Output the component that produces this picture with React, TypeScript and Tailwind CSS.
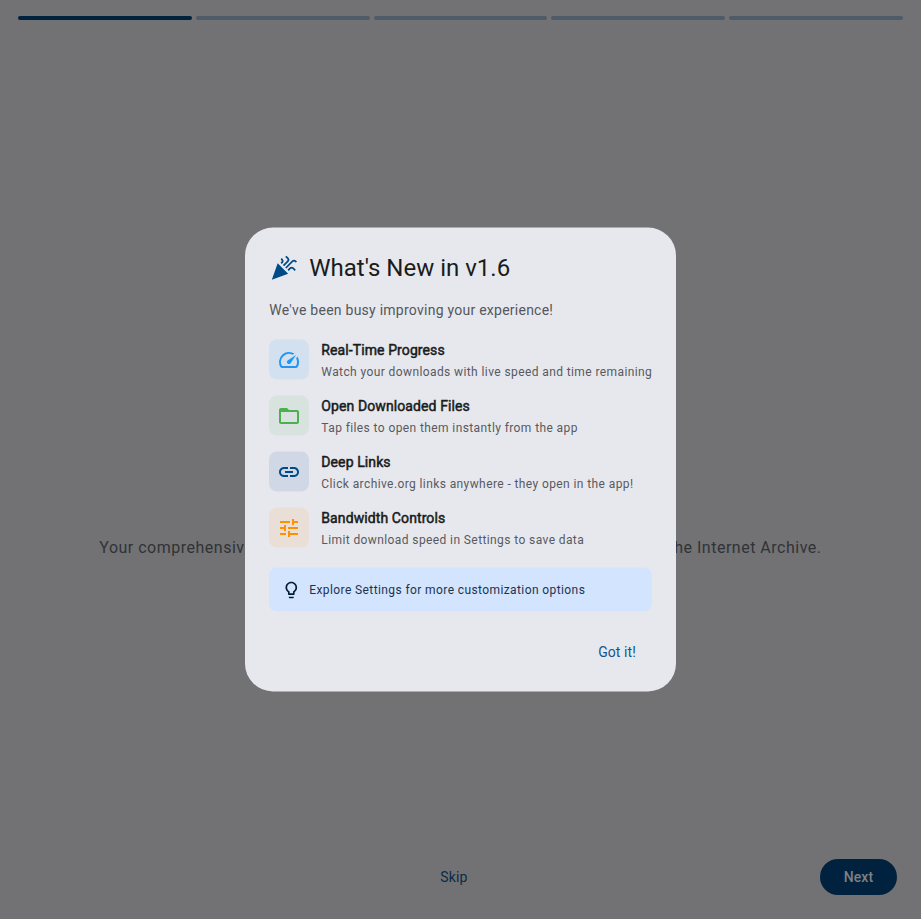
import type { ReactNode } from "react";
import {
  MdCelebration,
  MdFolderOpen,
  MdLightbulbOutline,
  MdLink,
  MdSpeed,
  MdTune,
} from "react-icons/md";

type Feature = { icon: ReactNode; tile: string; title: string; text: string };

const features: Feature[] = [
  {
    icon: <MdSpeed size={24} className="translate-y-[0.5px]" />,
    tile: "bg-[#d2e0ef] text-[#2196f3]",
    title: "Real-Time Progress",
    text: "Watch your downloads with live speed and time remaining",
  },
  {
    icon: <MdFolderOpen size={24} className="translate-y-[0.5px]" />,
    tile: "bg-[#d8e2de] text-[#4caf50]",
    title: "Open Downloaded Files",
    text: "Tap files to open them instantly from the app",
  },
  {
    icon: <MdLink size={24} className="translate-y-[0.5px]" />,
    tile: "bg-[#d0d8e5] text-[#004b87]",
    title: "Deep Links",
    text: "Click archive.org links anywhere - they open in the app!",
  },
  {
    icon: <MdTune size={24} className="translate-y-[0.5px]" />,
    tile: "bg-[#e9dfd6] text-[#ff9100]",
    title: "Bandwidth Controls",
    text: "Limit download speed in Settings to save data",
  },
];

function FeatureRow({ icon, tile, title, text }: Feature) {
  return (
    <li className="flex h-10 gap-3">
      <div className={`flex size-10 shrink-0 items-center justify-center rounded-lg ${tile}`}>{icon}</div>
      <div className="flex translate-x-[0.3px] flex-col whitespace-nowrap">
        <h3 className="text-[14px] leading-5 font-normal tracking-[0.1px] text-[#191c20] [-webkit-text-stroke:0.5px_#191c20]">
          {title}
        </h3>
        <p className="mt-1 text-[12px] leading-4 tracking-[0.4px] text-[#575a5f]">{text}</p>
      </div>
    </li>
  );
}

export default function App() {
  return (
    <div className="grid h-[919px] w-[921px] overflow-hidden bg-[#727274] font-['Roboto',sans-serif]">
      <div className="col-start-1 row-start-1 flex flex-col">
        <div className="flex gap-1 px-[18px] pt-4">
          {[0, 1, 2, 3, 4].map((step) => (
            <div
              key={step}
              className={`h-1 flex-1 rounded-full ${step === 0 ? "bg-[#00223e]" : "bg-[#4e5b69]"}`}
            />
          ))}
        </div>
        <div className="mt-[516px] flex h-6 justify-between pr-[99.5px] pl-[99.3px] text-[16px] leading-6 tracking-[0.5px] whitespace-nowrap text-[#303236]">
          <span>Your comprehensive</span>
          <span>the Internet Archive.</span>
        </div>
        <div className="mt-auto mb-6 flex h-9 items-center pr-6 text-[14px] leading-5 font-medium tracking-[0.1px]">
          <button className="ml-[440.3px] font-normal text-[#0a2a47]">Skip</button>
          <button className="ml-auto h-9 w-[77px] rounded-full bg-[#00223e] text-[#808083]">Next</button>
        </div>
      </div>

      <section
        role="dialog"
        className="z-10 col-start-1 row-start-1 mt-[227px] flex h-[464px] w-[431px] translate-y-[0.5px] flex-col justify-self-center rounded-[28px] bg-[#e7e8ed] p-6"
      >
        <header className="flex h-8 items-center gap-3">
          <MdCelebration size={28} className="translate-x-[0.5px] translate-y-[0.5px] text-[#004b87]" />
          <h2 className="translate-x-[0.3px] text-[24px] leading-8 text-[#191c20]">What's New in v1.6</h2>
        </header>
        <p className="mt-4 translate-x-[0.3px] text-[14px] leading-5 tracking-[0.25px] text-[#54575c]">
          We've been busy improving your experience!
        </p>
        <ul className="mt-5 flex flex-col gap-4">
          {features.map((feature) => (
            <FeatureRow key={feature.title} {...feature} />
          ))}
        </ul>
        <div className="mt-5 flex h-11 shrink-0 items-center gap-2 rounded-lg bg-[#d3e4ff] px-3 text-[12px] leading-4 tracking-[0.4px] text-[#1c3350]">
          <MdLightbulbOutline size={20} className="translate-x-[0.3px] translate-y-[0.5px] text-[#001c38]" />
          <span className="translate-x-[0.3px]">Explore Settings for more customization options</span>
        </div>
        <button className="mt-auto mr-4 mb-1.5 self-end text-[14px] leading-5 tracking-[0.1px] text-[#12558d]">
          Got it!
        </button>
      </section>
    </div>
  );
}
